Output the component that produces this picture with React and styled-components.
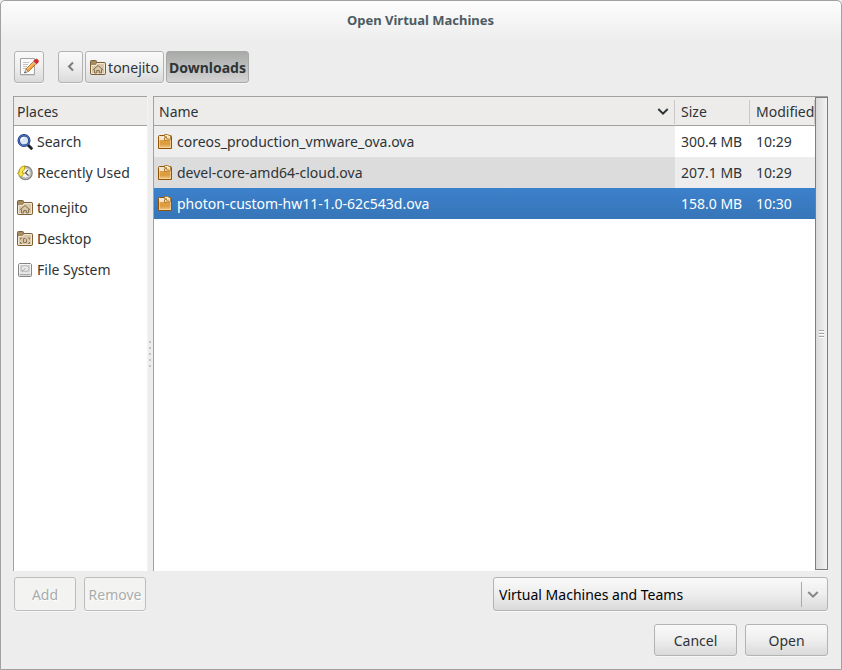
import React, { useState } from "react";
import styled, { createGlobalStyle, css } from "styled-components";

const GlobalStyle = createGlobalStyle`
  *, *::before, *::after { box-sizing: border-box; }
  html, body { margin: 0; padding: 0; background: #ededed; }
  body, button, select, table {
    font-family: "Noto Sans", "Open Sans", sans-serif;
    font-size: 14px;
    line-height: 20px;
    color: #2e3436;
  }
`;

const edge = "#a1a1a1";

const Dialog = styled.main`
  display: flex;
  flex-direction: column;
  height: 100vh;
  min-height: 400px;
  padding: 0 13px 13px 12px;
  border: 1px solid ${edge};
  border-radius: 5px 5px 0 0;
  background: linear-gradient(#fdfdfd, #ededed 40px);
`;

const Title = styled.h1`
  margin: 0 0 12px;
  padding-top: 9px;
  height: 38px;
  font-size: 13px;
  line-height: 20px;
  font-weight: 700;
  text-align: center;
  color: #4c5b62;
`;

const PathBar = styled.nav`
  display: flex;
  flex: none;
  gap: 1px;
  height: 32px;
  margin: 0 0 13px 1px;
`;

const buttonFace = css`
  border: 1px solid #b2b4b2;
  border-radius: 3px;
  background: linear-gradient(#f9f9f9, #eeeeee 50%, #dadada);
  box-shadow: 0 1px 0 #f8f8f8;
`;

const PathButton = styled.button`
  ${buttonFace}
  display: flex;
  align-items: center;
  justify-content: center;
  gap: 2px;
  width: ${(p) => p.$width};
  margin-right: ${(p) => p.$after || 0};
  padding: 2px 4px 0;
  white-space: nowrap;
  ${(p) =>
    p.$current &&
    css`
      padding: 2px 0 0;
      border-color: #a8aaa8;
      background: linear-gradient(#a7aaa7, #bebfbe 50%, #d3d3d3);
      font-weight: 700;
    `}
  ${(p) => p.$iconOnly && css`padding: 0;`}
`;

const Panes = styled.div`
  display: grid;
  grid-template-columns: 134px 6px minmax(0, 1fr);
  flex: 1;
  min-height: 0;
`;

const Pane = styled.section`
  display: flex;
  min-width: 0;
  flex-direction: ${(p) => (p.$column ? "column" : "row")};
  border: solid ${edge};
  border-width: 1px 0 0 1px;
  background: #fff;
`;

const PaneHeading = styled.h2`
  margin: 0;
  padding: 5px 3px 3px;
  height: 29px;
  border-bottom: 1px solid ${edge};
  background: #edeceb;
  font-size: 14px;
  line-height: 20px;
  font-weight: 400;
`;

const PlaceList = styled.ul`
  margin: 0;
  padding: 0;
  list-style: none;
`;

const PlaceItem = styled.li`
  margin-top: ${(p) => (p.$newGroup ? "4px" : "0")};
`;

const PlaceButton = styled.button`
  display: flex;
  align-items: center;
  gap: 4px;
  width: 100%;
  height: 31px;
  padding: 1px 3px 0;
  border: 0;
  background: none;
  white-space: nowrap;
`;

const Splitter = styled.div`
  display: flex;
  flex-direction: column;
  align-items: center;
  justify-content: center;
  gap: 4px;
  padding: 40px 1px 0 0;
  border-left: 1px solid #f2f2f2;
  cursor: col-resize;
`;

const Dot = styled.span`
  width: 2px;
  height: 2px;
  background: #c3c3c3;
`;

const TableArea = styled.div`
  flex: 1;
  min-width: 0;
`;

const FileTable = styled.table`
  width: 100%;
  table-layout: fixed;
  border-collapse: separate;
  border-spacing: 0;
`;

const HeadCell = styled.th`
  width: ${(p) => p.$width || "auto"};
  height: 29px;
  padding: 0;
  border-bottom: 1px solid ${edge};
  background: #edeceb;
  font-weight: 400;
  text-align: left;
`;

const HeadContent = styled.div`
  display: flex;
  align-items: center;
  justify-content: space-between;
  height: 24px;
  padding: 0 5px 0 ${(p) => (p.$first ? "5px" : "6px")};
  margin-top: 1px;
  border-right: 1px solid #c9c9c8;
  white-space: nowrap;
`;

const FileRow = styled.tr`
  td { background: ${(p) => (p.$odd ? "#ededed" : "#fff")}; }
  td:first-child { background: ${(p) => (p.$odd ? "#dcdcdc" : "#eeeeee")}; }
  ${(p) =>
    p.$selected &&
    css`
      color: #fff;
      td, td:first-child { background: linear-gradient(#3c81cc, #3775b7); }
    `}
`;

const Cell = styled.td`
  height: 31px;
  padding: 1px 0 0 ${(p) => (p.$first ? "3px" : "6px")};
  white-space: nowrap;
`;

const FileName = styled.div`
  display: flex;
  align-items: center;
  gap: 4px;
`;

const ScrollThumb = styled.div`
  display: flex;
  flex-direction: column;
  align-items: center;
  justify-content: center;
  gap: 2px;
  flex: none;
  width: 13px;
  border: 1px solid #7d7d7d;
  background: linear-gradient(90deg, #dadada, #f3f3f3);
`;

const ScrollGutter = styled.div`
  display: flex;
  flex: none;
  width: 13px;
  padding-bottom: 1px;
  background: #f5f5f5;
`;

const Grip = styled.span`
  width: 5px;
  height: 1px;
  background: #a5a5a5;
  box-shadow: 0 1px 0 #fff;
`;

const Actions = styled.div`
  display: flex;
  flex: none;
  justify-content: ${(p) => (p.$end ? "flex-end" : "flex-start")};
  gap: 8px;
  margin-top: ${(p) => (p.$end ? "13px" : "6px")};
  padding-left: 1px;
`;

const ActionButton = styled.button`
  ${buttonFace}
  width: ${(p) => p.$width};
  height: ${(p) => (p.$tall ? "34px" : "32px")};
  padding: 2px 0 0;
  &:disabled {
    border-color: #bcbdbc;
    background: #f3f3f2;
    color: #a9acac;
    text-shadow: 1px 1px 0 #fff;
  }
`;

const FilterBox = styled.div`
  position: relative;
  width: 335px;
  margin-left: auto;
`;

const Filter = styled.select`
  ${buttonFace}
  appearance: none;
  display: block;
  width: 100%;
  height: 34px;
  padding: 2px 30px 0 5px;
  color: #000;
`;

const FilterArrow = styled.span`
  position: absolute;
  top: 5px;
  right: 0;
  bottom: 4px;
  display: flex;
  align-items: center;
  width: 27px;
  padding-left: 5px;
  border-left: 1px solid #a9a9a9;
  pointer-events: none;
`;

const Icon = styled.svg`
  display: block;
  flex: none;
`;

function Chevron({ left, color }) {
  return (
    <Icon width="12" height="12" viewBox="0 0 12 12" fill="none" stroke={color} strokeWidth="2" aria-hidden="true">
      <path d={left ? "M8 1.500 4 5.500l4 4" : "M1.300 3 6 7.700 10.700 3"} />
    </Icon>
  );
}

function EditIcon() {
  return (
    <Icon width="22" height="22" viewBox="0 0 22 22" aria-hidden="true">
      <path d="M2.500 2.500h14v16h-14z" fill="#fafafa" stroke="#a3a3a3" />
      <path d="M5 6.500h6M5 8.500h5M5 10.500h4M5 12.500h3" stroke="#c3c3c3" />
      <path d="M2 19.500h15" stroke="#cfcfcf" />
      <path d="M8 13 16 5l2.500 2.500-8 8z" fill="#f5a33c" stroke="#a8641c" strokeWidth=".8" />
      <path d="M9 13.300 16.500 6" stroke="#ffd18a" />
      <path d="M6.500 17 8 13l2.500 2.500z" fill="#e9dcc0" stroke="#77664a" strokeWidth=".6" />
      <path d="M6.500 17l.5-1.500 1 1z" fill="#222" />
      <path d="M14.700 6.300l2.500 2.500 1-1-2.500-2.500z" fill="#bfc4c8" />
      <path d="M15.700 5 17.200 3.500q1.300-1 2.600.3t.3 2.600L18.500 7.800z" fill="#e02b2b" stroke="#c01c1c" strokeWidth=".6" />
    </Icon>
  );
}

function FolderIcon({ home }) {
  return (
    <Icon width="16" height="16" viewBox="0 0 16 16" aria-hidden="true">
      <path d="M.5 13.500v-12q0-1 1-1h4q1 0 1 1v1h8q1 0 1 1v10q0 1-1 1h-13q-1 0-1-1z" fill="#a58a62" stroke="#7b6037" />
      <path d="M1.500 5.500h4.500l1-2h7.500v10h-13z" fill="#d8c8a9" stroke="#f0e6d1" />
      {home ? (
        <path d="M2.800 10 8 5.500l5.200 4.500M4.500 9.500v3.500h2.200V10.500h2.600V13h2.200V9.500" fill="none" stroke="#86704c" />
      ) : (
        <path d="M3.500 8.500v-1.500h1.500m6 0h1.500v1.500m0 2.500v1.500h-1.500m-6 0h-1.500v-1.500M6.500 7.500h2l1 1v3h-3z" fill="none" stroke="#8d7650" />
      )}
    </Icon>
  );
}

function SearchIcon() {
  return (
    <Icon width="16" height="16" viewBox="0 0 16 16" aria-hidden="true">
      <path d="M11 11l3.300 3.300" stroke="#202225" strokeWidth="3" strokeLinecap="round" />
      <circle cx="7" cy="6.500" r="5.300" fill="#dbe6f3" stroke="#1e3372" strokeWidth="2.400" />
      <circle cx="7" cy="6.500" r="5.300" fill="none" stroke="#4a70cc" strokeWidth="1.100" />
      <path d="M4.300 6.400q.3-2.500 2.800-2.700" fill="none" stroke="#fff" strokeWidth="1.200" />
    </Icon>
  );
}

function RecentIcon() {
  return (
    <Icon width="16" height="16" viewBox="0 0 16 16" aria-hidden="true">
      <circle cx="8.500" cy="8" r="6.700" fill="#c9cac6" stroke="#858681" strokeWidth="1.200" />
      <circle cx="8.500" cy="8" r="4.900" fill="#f3f3f0" stroke="#a5a6a1" strokeWidth=".8" />
      <path d="M11 5 8.500 8l3 2.500" fill="none" stroke="#454743" strokeWidth="1.100" />
      <path d="M7.500.7v4Q5 5.300 5.200 8h2.300L4 11.900.3 8H2Q1.800 2 7.500.7z" fill="#f8e64f" stroke="#c2a30a" strokeWidth=".9" />
    </Icon>
  );
}

function DriveIcon() {
  return (
    <Icon width="16" height="16" viewBox="0 0 16 16" aria-hidden="true">
      <path d="M2.500 1.500h11l1 1v11q0 1-1 1h-11q-1 0-1-1v-11z" fill="#d9d9d9" stroke="#858585" />
      <path d="M2.500 2.500h11v8.500h-11z" fill="#d3d3d3" stroke="#f5f5f5" />
      <ellipse cx="8" cy="6.500" rx="4" ry="3" fill="#e9e9e9" stroke="#b8b8b8" />
      <path d="M5 9.500l3.500-3" stroke="#a5a5a5" />
      <path d="M3 12.500h10" stroke="#a8a8a8" />
    </Icon>
  );
}

function PackageIcon() {
  return (
    <Icon width="16" height="16" viewBox="0 0 16 16" aria-hidden="true">
      <defs>
        <linearGradient id="box" x2="0" y2="1">
          <stop stopColor="#e0a145" />
          <stop offset=".5" stopColor="#dc9a3c" />
          <stop offset="1" stopColor="#efc98c" />
        </linearGradient>
      </defs>
      <path d="M1.500 2.500q0-1 1-1h11q1 0 1 1v12h-13z" fill="#f3e5cd" stroke="#925404" />
      <path d="M2 6h12v8H2z" fill="url(#box)" />
      <path d="M2.500 5.500v8h11v-8" fill="none" stroke="#f7dfb2" strokeOpacity=".6" />
      <path d="M7.500.5h3l3 1.500v3.500l-6 1V3.800l2.500-.6-2.500-.7z" fill="#f8ecd3" stroke="#a8701f" strokeWidth=".9" />
      <path d="M9 4.800l3-.8" stroke="#b98033" strokeWidth=".8" />
    </Icon>
  );
}

const places = [
  { label: "Search", icon: <SearchIcon /> },
  { label: "Recently Used", icon: <RecentIcon /> },
  { label: "tonejito", icon: <FolderIcon home />, newGroup: true },
  { label: "Desktop", icon: <FolderIcon /> },
  { label: "File System", icon: <DriveIcon /> },
];

const files = [
  { name: "coreos_production_vmware_ova.ova", size: "300.4 MB", modified: "10:29" },
  { name: "devel-core-amd64-cloud.ova", size: "207.1 MB", modified: "10:29" },
  { name: "photon-custom-hw11-1.0-62c543d.ova", size: "158.0 MB", modified: "10:30" },
];

export default function App() {
  const [selected, setSelected] = useState(2);

  return (
    <>
      <GlobalStyle />
      <Dialog>
        <Title>Open Virtual Machines</Title>
        <PathBar aria-label="Path">
          <PathButton $width="30px" $after="13px" $iconOnly aria-label="Type a file name">
            <EditIcon />
          </PathButton>
          <PathButton $width="25px" $after="1px" $iconOnly aria-label="Back">
            <Chevron left color="#7b7d7c" />
          </PathButton>
          <PathButton $width="79px" $after="1px">
            <FolderIcon home />
            tonejito
          </PathButton>
          <PathButton $width="83px" $current aria-current="page">
            Downloads
          </PathButton>
        </PathBar>

        <Panes>
          <Pane $column>
            <PaneHeading>Places</PaneHeading>
            <PlaceList>
              {places.map((place) => (
                <PlaceItem key={place.label} $newGroup={place.newGroup}>
                  <PlaceButton>
                    {place.icon}
                    {place.label}
                  </PlaceButton>
                </PlaceItem>
              ))}
            </PlaceList>
          </Pane>
          <Splitter role="separator" aria-orientation="vertical">
            <Dot />
            <Dot />
            <Dot />
            <Dot />
            <Dot />
          </Splitter>
          <Pane>
            <TableArea>
              <FileTable>
                <thead>
                  <tr>
                    <HeadCell aria-sort="descending">
                      <HeadContent $first>
                        Name
                        <Chevron color="#2e3436" />
                      </HeadContent>
                    </HeadCell>
                    <HeadCell $width="75px">
                      <HeadContent>Size</HeadContent>
                    </HeadCell>
                    <HeadCell $width="65px">
                      <HeadContent>Modified</HeadContent>
                    </HeadCell>
                  </tr>
                </thead>
                <tbody>
                  {files.map((file, i) => (
                    <FileRow
                      key={file.name}
                      $odd={i % 2 === 1}
                      $selected={i === selected}
                      aria-selected={i === selected}
                      onClick={() => setSelected(i)}
                    >
                      <Cell $first>
                        <FileName>
                          <PackageIcon />
                          {file.name}
                        </FileName>
                      </Cell>
                      <Cell>{file.size}</Cell>
                      <Cell>{file.modified}</Cell>
                    </FileRow>
                  ))}
                </tbody>
              </FileTable>
            </TableArea>
            <ScrollGutter>
              <ScrollThumb>
                <Grip />
                <Grip />
                <Grip />
              </ScrollThumb>
            </ScrollGutter>
          </Pane>
        </Panes>

        <Actions>
          <ActionButton $width="62px" $tall disabled>Add</ActionButton>
          <ActionButton $width="62px" $tall disabled>Remove</ActionButton>
          <FilterBox>
            <Filter aria-label="File type" defaultValue="vm">
              <option value="vm">Virtual Machines and Teams</option>
            </Filter>
            <FilterArrow>
              <Chevron color="#858786" />
            </FilterArrow>
          </FilterBox>
        </Actions>
        <Actions $end>
          <ActionButton $width="83px">Cancel</ActionButton>
          <ActionButton $width="83px">Open</ActionButton>
        </Actions>
      </Dialog>
    </>
  );
}
